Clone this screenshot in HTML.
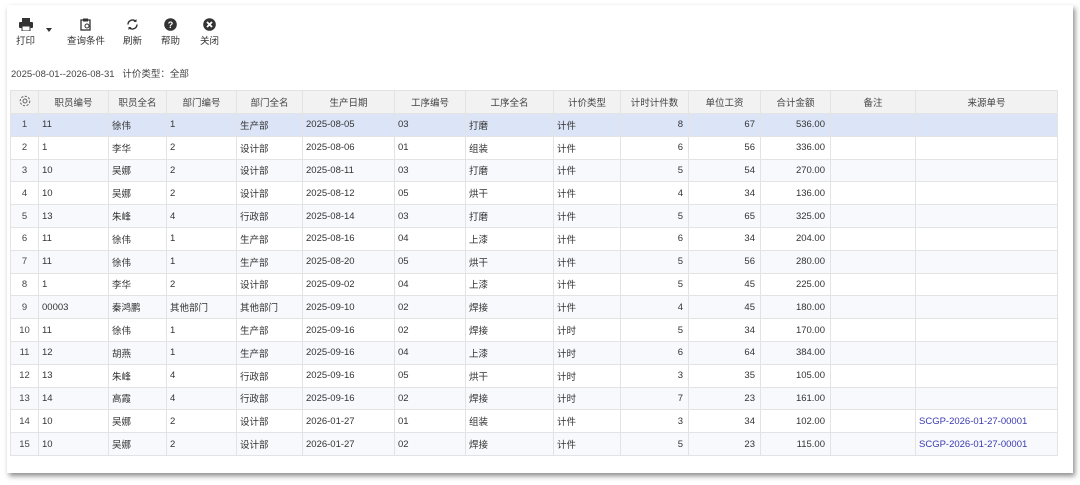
<!DOCTYPE html>
<html><head><meta charset="utf-8"><style>
body{margin:0;width:1080px;height:485px;background:#fff;font-family:"Liberation Sans","Noto Sans CJK SC",sans-serif;position:relative;overflow:hidden;color:#333}
.card{position:absolute;left:7px;top:5px;width:1066px;height:468px;background:#fff;box-shadow:2px 3px 5px rgba(0,0,0,.45);}
.tb{position:absolute;top:18px;font-size:9.5px;color:#333;text-align:center}
.tb svg{display:block;margin:0 auto 2px}
.info{position:absolute;left:11px;top:66px;font-size:9.5px;color:#444}
table{position:absolute;left:10px;top:90px;border-collapse:collapse;table-layout:fixed;font-size:9.5px;width:1047px}
td,th{border:1px solid #e3e3e3;padding:0 3px;white-space:nowrap;overflow:hidden;height:21.8px}
th{background:#f2f2f2;font-weight:normal;color:#444;height:22px}
tr:nth-child(even) td{background:#f7f9fc}
tr.sel td{background:#dce5f7}
td.n{text-align:center;color:#444}
td.r{text-align:right;padding-right:5px}
a{color:#3a3ab0;text-decoration:none}
</style></head><body>
<div class="card"></div>
<div class="tb" style="left:16px"><svg width="14" height="13" viewBox="0 0 14 13"><rect x="3" y="0" width="8" height="4" fill="#333"/><rect x="0" y="4" width="14" height="6" rx="1" fill="#333"/><rect x="3" y="8" width="8" height="5" fill="#fff" stroke="#333"/></svg>打印</div>
<div style="position:absolute;left:46px;top:28px;width:0;height:0;border-left:3px solid transparent;border-right:3px solid transparent;border-top:4px solid #333"></div>
<div class="tb" style="left:67px"><svg width="12" height="13" viewBox="0 0 12 13"><rect x="1" y="2" width="9" height="10" fill="none" stroke="#333" stroke-width="1.3"/><rect x="3" y="0.5" width="5" height="3" fill="#333"/><circle cx="7" cy="8" r="2" fill="none" stroke="#333"/></svg>查询条件</div>
<div class="tb" style="left:123px"><svg width="13" height="13" viewBox="0 0 13 13"><path d="M2 6.5a4.5 4.5 0 0 1 8-2.8M11 6.5a4.5 4.5 0 0 1-8 2.8" fill="none" stroke="#333" stroke-width="1.4"/><path d="M10.5 1v3h-3z M2.5 12v-3h3z" fill="#333"/></svg>刷新</div>
<div class="tb" style="left:161px"><svg width="13" height="13" viewBox="0 0 13 13"><circle cx="6.5" cy="6.5" r="6.3" fill="#333"/><text x="6.5" y="10" font-size="9" font-weight="bold" fill="#fff" text-anchor="middle" font-family="Liberation Sans">?</text></svg>帮助</div>
<div class="tb" style="left:200px"><svg width="13" height="13" viewBox="0 0 13 13"><circle cx="6.5" cy="6.5" r="6.3" fill="#333"/><path d="M4 4l5 5M9 4l-5 5" stroke="#fff" stroke-width="1.8"/></svg>关闭</div>
<div class="info">2025-08-01--2026-08-31 &nbsp; 计价类型：全部</div>
<table>
<colgroup><col style="width:28px"><col style="width:70px"><col style="width:58px"><col style="width:70px"><col style="width:66px"><col style="width:92px"><col style="width:71px"><col style="width:88px"><col style="width:67px"><col style="width:68px"><col style="width:72px"><col style="width:70px"><col style="width:85px"><col style="width:142px"></colgroup>
<tr><th><svg width="12" height="12" viewBox="0 0 12 12"><circle cx="6" cy="6" r="2" fill="none" stroke="#666"/><circle cx="6" cy="6" r="4.8" fill="none" stroke="#666" stroke-dasharray="2.2 1.5"/></svg></th><th>职员编号</th><th>职员全名</th><th>部门编号</th><th>部门全名</th><th>生产日期</th><th>工序编号</th><th>工序全名</th><th>计价类型</th><th>计时计件数</th><th>单位工资</th><th>合计金额</th><th>备注</th><th>来源单号</th></tr>
<tr class="sel"><td class="n">1</td><td>11</td><td>徐伟</td><td>1</td><td>生产部</td><td>2025-08-05</td><td>03</td><td>打磨</td><td>计件</td><td class="r">8</td><td class="r">67</td><td class="r">536.00</td><td></td><td></td></tr>
<tr><td class="n">2</td><td>1</td><td>李华</td><td>2</td><td>设计部</td><td>2025-08-06</td><td>01</td><td>组装</td><td>计件</td><td class="r">6</td><td class="r">56</td><td class="r">336.00</td><td></td><td></td></tr>
<tr><td class="n">3</td><td>10</td><td>吴娜</td><td>2</td><td>设计部</td><td>2025-08-11</td><td>03</td><td>打磨</td><td>计件</td><td class="r">5</td><td class="r">54</td><td class="r">270.00</td><td></td><td></td></tr>
<tr><td class="n">4</td><td>10</td><td>吴娜</td><td>2</td><td>设计部</td><td>2025-08-12</td><td>05</td><td>烘干</td><td>计件</td><td class="r">4</td><td class="r">34</td><td class="r">136.00</td><td></td><td></td></tr>
<tr><td class="n">5</td><td>13</td><td>朱峰</td><td>4</td><td>行政部</td><td>2025-08-14</td><td>03</td><td>打磨</td><td>计件</td><td class="r">5</td><td class="r">65</td><td class="r">325.00</td><td></td><td></td></tr>
<tr><td class="n">6</td><td>11</td><td>徐伟</td><td>1</td><td>生产部</td><td>2025-08-16</td><td>04</td><td>上漆</td><td>计件</td><td class="r">6</td><td class="r">34</td><td class="r">204.00</td><td></td><td></td></tr>
<tr><td class="n">7</td><td>11</td><td>徐伟</td><td>1</td><td>生产部</td><td>2025-08-20</td><td>05</td><td>烘干</td><td>计件</td><td class="r">5</td><td class="r">56</td><td class="r">280.00</td><td></td><td></td></tr>
<tr><td class="n">8</td><td>1</td><td>李华</td><td>2</td><td>设计部</td><td>2025-09-02</td><td>04</td><td>上漆</td><td>计件</td><td class="r">5</td><td class="r">45</td><td class="r">225.00</td><td></td><td></td></tr>
<tr><td class="n">9</td><td>00003</td><td>秦鸿鹏</td><td>其他部门</td><td>其他部门</td><td>2025-09-10</td><td>02</td><td>焊接</td><td>计件</td><td class="r">4</td><td class="r">45</td><td class="r">180.00</td><td></td><td></td></tr>
<tr><td class="n">10</td><td>11</td><td>徐伟</td><td>1</td><td>生产部</td><td>2025-09-16</td><td>02</td><td>焊接</td><td>计时</td><td class="r">5</td><td class="r">34</td><td class="r">170.00</td><td></td><td></td></tr>
<tr><td class="n">11</td><td>12</td><td>胡燕</td><td>1</td><td>生产部</td><td>2025-09-16</td><td>04</td><td>上漆</td><td>计时</td><td class="r">6</td><td class="r">64</td><td class="r">384.00</td><td></td><td></td></tr>
<tr><td class="n">12</td><td>13</td><td>朱峰</td><td>4</td><td>行政部</td><td>2025-09-16</td><td>05</td><td>烘干</td><td>计时</td><td class="r">3</td><td class="r">35</td><td class="r">105.00</td><td></td><td></td></tr>
<tr><td class="n">13</td><td>14</td><td>高霞</td><td>4</td><td>行政部</td><td>2025-09-16</td><td>02</td><td>焊接</td><td>计时</td><td class="r">7</td><td class="r">23</td><td class="r">161.00</td><td></td><td></td></tr>
<tr><td class="n">14</td><td>10</td><td>吴娜</td><td>2</td><td>设计部</td><td>2026-01-27</td><td>01</td><td>组装</td><td>计件</td><td class="r">3</td><td class="r">34</td><td class="r">102.00</td><td></td><td><a>SCGP-2026-01-27-00001</a></td></tr>
<tr><td class="n">15</td><td>10</td><td>吴娜</td><td>2</td><td>设计部</td><td>2026-01-27</td><td>02</td><td>焊接</td><td>计件</td><td class="r">5</td><td class="r">23</td><td class="r">115.00</td><td></td><td><a>SCGP-2026-01-27-00001</a></td></tr>
</table>
</body></html>
